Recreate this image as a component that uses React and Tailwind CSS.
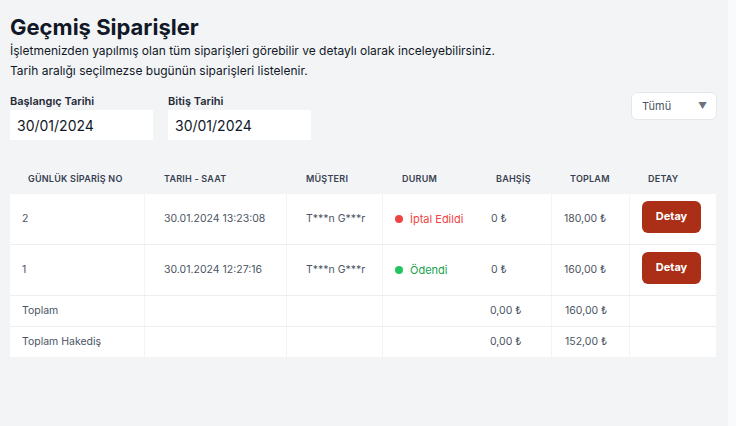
import React from 'react';

const rows = [
    { no: '2', date: '30.01.2024 13:23:08', customer: 'T***n G***r', status: 'İptal Edildi', ok: false, tip: '0 ₺', total: '180,00 ₺' },
    { no: '1', date: '30.01.2024 12:27:16', customer: 'T***n G***r', status: 'Ödendi', ok: true, tip: '0 ₺', total: '160,00 ₺' },
];

const totals = [
    { label: 'Toplam', tip: '0,00 ₺', total: '160,00 ₺' },
    { label: 'Toplam Hakediş', tip: '0,00 ₺', total: '152,00 ₺' },
];

const grid = 'grid grid-cols-[135px_142px_96px_100px_69px_78px_86px]';
const line = 'border-r border-[#f3f4f6]';

const App = () => {
    return (
        <div className="flex min-h-screen bg-[#f9fafb]" style={{ fontFamily: 'Inter, "Noto Sans", sans-serif' }}>
            <div className="w-[728px] bg-[#f3f4f6] pl-[10px] pt-[13px] pb-10">
                <h1 className="text-[22px] leading-7 font-bold text-[#111827]">Geçmiş Siparişler</h1>
                <p className="text-[12px] leading-5 text-[#111827]">
                    İşletmenizden yapılmış olan tüm siparişleri görebilir ve detaylı olarak inceleyebilirsiniz.
                    <br />
                    Tarih aralığı seçilmezse bugünün siparişleri listelenir.
                </p>

                <div className="flex items-start w-[707px] mt-[12px]">
                    <div className="flex flex-col w-[158px]">
                        <label className="text-[11px] leading-4 font-semibold text-[#1f2937]">Başlangıç Tarihi</label>
                        <div className="mt-px h-[30px] w-[143px] bg-white flex items-center pl-[7px] text-[14px] text-[#111827]">30/01/2024</div>
                    </div>
                    <div className="flex flex-col w-[158px]">
                        <label className="text-[11px] leading-4 font-semibold text-[#1f2937]">Bitiş Tarihi</label>
                        <div className="mt-px h-[30px] w-[143px] bg-white flex items-center pl-[7px] text-[14px] text-[#111827]">30/01/2024</div>
                    </div>
                    <div className="ml-auto -mt-px h-[28px] w-[86px] bg-white border border-[#e5e7eb] rounded-md flex items-center justify-between pl-[10px] pr-[9px]">
                        <span className="text-[11px] text-[#4b5563]">Tümü</span>
                        <span className="text-[9px] text-[#6b7280]">▼</span>
                    </div>
                </div>

                <div className="w-[706px] mt-[24px]">
                    <div className={`${grid} h-[30px] items-center text-[9px] font-semibold tracking-wide text-[#374151] uppercase`}>
                        <div className="pl-[18px]">GÜNLÜK SİPARİŞ NO</div>
                        <div className="pl-[19px]">TARIH - SAAT</div>
                        <div className="pl-[19px]">MÜŞTERI</div>
                        <div className="pl-[19px]">DURUM</div>
                        <div className="pl-[13px]">BAHŞİŞ</div>
                        <div className="pl-[18px]">TOPLAM</div>
                        <div className="pl-[18px]">DETAY</div>
                    </div>

                    <div className="bg-white">
                        {rows.map((r) => (
                            <div key={r.no} className={`${grid} h-[51px] border-b border-[#eceef1] text-[10.5px] text-[#4b5563]`}>
                                <div className={`${line} pl-3 flex items-center`}>{r.no}</div>
                                <div className={`${line} pl-[19px] flex items-center`}>{r.date}</div>
                                <div className={`${line} pl-[19px] flex items-center`}>{r.customer}</div>
                                <div className="pl-3 flex items-center gap-[7px]">
                                    <span className={`w-2 h-2 rounded-full ${r.ok ? 'bg-[#22c55e]' : 'bg-[#ef4444]'}`} />
                                    <span className={`text-[11px] ${r.ok ? 'text-[#16a34a]' : 'text-[#ef4444]'}`}>{r.status}</span>
                                </div>
                                <div className={`${line} pl-2 flex items-center`}>{r.tip}</div>
                                <div className={`${line} pl-3 flex items-center`}>{r.total}</div>
                                <div className="pl-3 flex items-center">
                                    <button className="mb-[5px] h-[32px] w-[59px] rounded-md bg-[#ab2e16] text-white text-[11px] font-bold">Detay</button>
                                </div>
                            </div>
                        ))}
                        {totals.map((t, i) => (
                            <div key={t.label} className={`${grid} text-[10.5px] text-[#4b5563] ${i === 0 ? 'h-[31px] border-b border-[#eceef1]' : 'h-[30px]'}`}>
                                <div className={`${line} pl-3 flex items-center`}>{t.label}</div>
                                <div className={`${line}`} />
                                <div className={`${line}`} />
                                <div />
                                <div className={`${line} pl-[7px] flex items-center`}>{t.tip}</div>
                                <div className={`${line} pl-[13px] flex items-center`}>{t.total}</div>
                                <div />
                            </div>
                        ))}
                    </div>
                </div>
            </div>
            <div className="flex-1" />
        </div>
    );
};

export default App;
